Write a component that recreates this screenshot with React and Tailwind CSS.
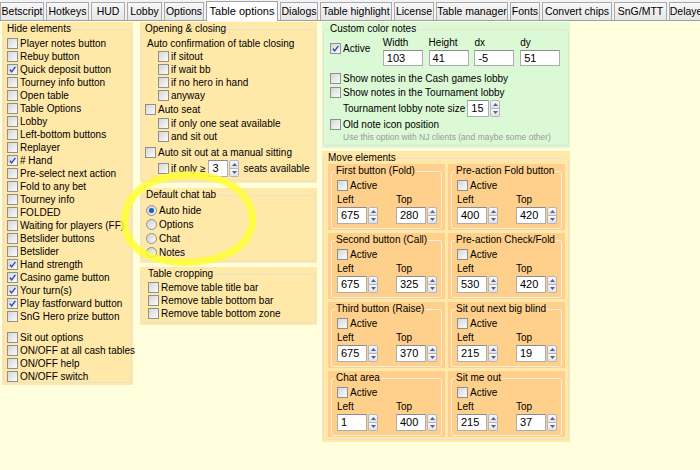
import React from 'react'

const tabs = [
  ['Betscript', 44],
  ['Hotkeys', 43],
  ['HUD', 34],
  ['Lobby', 35],
  ['Options', 40],
  ['Table options', 72],
  ['Dialogs', 38],
  ['Table highlight', 72],
  ['License', 40],
  ['Table manager', 72],
  ['Fonts', 30],
  ['Convert chips', 70],
  ['SnG/MTT', 53],
  ['Delayed', 40],
]

const hideItems = [
  ['Player notes button'],
  ['Rebuy button'],
  ['Quick deposit button', true],
  ['Tourney info button'],
  ['Open table'],
  ['Table Options'],
  ['Lobby'],
  ['Left-bottom buttons'],
  ['Replayer'],
  ['# Hand', true],
  ['Pre-select next action'],
  ['Fold to any bet'],
  ['Tourney info'],
  ['FOLDED'],
  ['Waiting for players (FF)'],
  ['Betslider buttons'],
  ['Betslider'],
  ['Hand strength', true],
  ['Casino game button', true],
  ['Your turn(s)', true],
  ['Play fastforward button', true],
  ['SnG Hero prize button'],
]

const moveBoxes = [
  ['First button (Fold)', '675', '280'],
  ['Pre-action Fold button', '400', '420'],
  ['Second button (Call)', '675', '325'],
  ['Pre-action Check/Fold', '530', '420'],
  ['Third button (Raise)', '675', '370'],
  ['Sit out next big blind', '215', '19'],
  ['Chat area', '1', '400'],
  ['Sit me out', '215', '37'],
]

function Box({ checked }) {
  return (
    <span className="relative inline-block w-[11px] h-[11px] shrink-0 border border-[#8e8f8f] bg-linear-to-br from-[#d6d6d6] to-[#fbfbfb]">
      {checked && (
        <svg viewBox="0 0 9 9" className="absolute left-0 top-0 w-[9px] h-[9px]">
          <path d="M1.8 4.6 L3.6 6.8 L7.4 1.8" fill="none" stroke="#2b48b6" strokeWidth="1.4" />
        </svg>
      )}
    </span>
  )
}

function Radio({ on }) {
  return (
    <span className="relative inline-flex items-center justify-center w-[11px] h-[11px] shrink-0 rounded-full border border-[#8e8f8f] bg-linear-to-br from-[#d0d0d0] to-[#fafafa]">
      {on && <span className="w-[5px] h-[5px] rounded-full bg-[#1f5fbf] shadow-[0_0_1px_#6aa8f0]" />}
    </span>
  )
}

function Row({ checked, children, className = '' }) {
  return (
    <div className={`flex items-center h-[13px] gap-[2px] ${className}`}>
      <Box checked={checked} />
      <span className="whitespace-nowrap leading-[13px]">{children}</span>
    </div>
  )
}

function Spinner() {
  return (
    <div className="flex flex-col w-[10px] h-[17px] ml-[1px]">
      <div className="flex-1 flex items-center justify-center border border-[#b5b5b5] rounded-t-[2px] bg-linear-to-b from-[#fafafa] to-[#e2e2e2]">
        <svg viewBox="0 0 5 3" className="w-[5px] h-[3px]"><path d="M0 3 L2.5 0 L5 3 Z" fill="#4d5fa6" /></svg>
      </div>
      <div className="flex-1 flex items-center justify-center border border-t-0 border-[#b5b5b5] rounded-b-[2px] bg-linear-to-b from-[#fafafa] to-[#e2e2e2]">
        <svg viewBox="0 0 5 3" className="w-[5px] h-[3px]"><path d="M0 0 L2.5 3 L5 0 Z" fill="#4d5fa6" /></svg>
      </div>
    </div>
  )
}

function Field({ value, w = 'w-[30px]', h = 'h-[17px]' }) {
  return (
    <div className={`${w} ${h} bg-white border border-[#abadb3] border-t-[#8a8c92] flex items-center pl-[3px] text-[11px]`}>
      {value}
    </div>
  )
}

function Spin({ value, w }) {
  return (
    <div className="flex items-center">
      <Field value={value} w={w} />
      <Spinner />
    </div>
  )
}

function Panel({ title, bg = 'bg-[#ffe8a8]', h, children, pl = 'pl-[3px]' }) {
  return (
    <div className={`${bg} ${h} px-[1px] pt-[1px] pb-[2px]`}>
      <fieldset className={`h-full min-w-0 border border-[#e6e2cf] rounded-[3px] ${pl} pr-[2px]`}>
        <legend className="leading-[12px] px-[1px] -ml-[1px]">{title}</legend>
        {children}
      </fieldset>
    </div>
  )
}

function MoveBox({ title, left, top }) {
  return (
    <div className="bg-[#ffd08b] h-[66px] px-[3px] pt-[1px] pb-[1px]">
      <fieldset className="h-full min-w-0 border border-[#f6eee0] rounded-[3px] pl-[5px]">
        <legend className="leading-[12px] -ml-[2px] px-[1px] whitespace-nowrap">{title}</legend>
        <div className="flex items-center h-[13px] gap-[2px] mt-[2px]">
          <Box />
          <span>Active</span>
        </div>
        <div className="flex mt-[1px]">
          <div className="w-[59px]">
            <div className="leading-[13px] mb-[1px]">Left</div>
            <Spin value={left} />
          </div>
          <div>
            <div className="leading-[13px] mb-[1px]">Top</div>
            <Spin value={top} />
          </div>
        </div>
      </fieldset>
    </div>
  )
}

export default function App() {
  return (
    <div className="relative w-[700px] h-[470px] overflow-hidden bg-[#ffffde] text-black text-[10px] [font-family:'Liberation_Sans',Arial,sans-serif]">
      {/* tab strip */}
      <div className="h-[21px] flex items-end gap-[2px] bg-[#f3f3f3] border-b border-[#a0a0a0]">
        {tabs.map(([t, w]) => {
          const active = t === 'Table options'
          return (
            <div
              key={t}
              style={{ width: w }}
              className={
                active
                  ? 'relative z-10 -mb-[1px] h-[20px] shrink-0 flex items-center justify-center bg-white border border-b-0 border-[#a0a0a0] text-[11px] whitespace-nowrap'
                  : 'h-[18px] shrink-0 flex items-center justify-center bg-linear-to-b from-[#f8f8f8] to-[#e6e6e6] border border-b-0 border-[#a9a9a9] text-[10.5px] whitespace-nowrap overflow-hidden'
              }
            >
              {t}
            </div>
          )
        })}
      </div>

      <div className="flex pt-[1px]">
        {/* left column */}
        <div className="ml-[2px] w-[131px]">
          <Panel title="Hide elements" h="h-[363px]">
            <div className="pt-[2px]">
              {hideItems.map(([t, c]) => (
                <Row key={t} checked={c}>{t}</Row>
              ))}
              <div className="h-[8px]" />
              <Row>Sit out options</Row>
              <Row>ON/OFF at all cash tables</Row>
              <Row>ON/OFF help</Row>
              <Row>ON/OFF switch</Row>
            </div>
          </Panel>
        </div>

        {/* middle column */}
        <div className="ml-[7px] w-[177px] flex flex-col gap-[4px]">
          <Panel title="Opening & closing" h="h-[161px]">
            <div className="pt-[2px]">
              <div className="leading-[13px] pl-[2px]">Auto confirmation of table closing</div>
              <div className="pl-[13px]">
                <Row>if sitout</Row>
                <Row>if wait bb</Row>
                <Row>if no hero in hand</Row>
                <Row>anyway</Row>
              </div>
              <Row className="mt-[1px]">Auto seat</Row>
              <div className="pl-[13px] mt-[1px]">
                <Row>if only one seat available</Row>
                <Row>and sit out</Row>
              </div>
              <Row className="mt-[3px]">Auto sit out at a manual sitting</Row>
              <div className="pl-[13px] mt-[1px] flex items-center h-[17px] gap-[2px]">
                <Box />
                <span className="whitespace-nowrap">if only ≥</span>
                <div className="flex items-center ml-[1px]">
                  <Field value="3" w="w-[20px]" />
                  <Spinner />
                </div>
                <span className="ml-[2px] whitespace-nowrap">seats available</span>
              </div>
            </div>
          </Panel>

          <div className="mt-[1px]">
            <Panel title="Default chat tab" h="h-[75px]" pl="pl-[4px]">
              <div className="pt-[2px]">
                {['Auto hide', 'Options', 'Chat', 'Notes'].map((t, i) => (
                  <div key={t} className="flex items-center h-[14px] gap-[2px]">
                    <Radio on={i === 0} />
                    <span>{t}</span>
                  </div>
                ))}
              </div>
            </Panel>
          </div>

          <Panel title="Table cropping" h="h-[58px]" pl="pl-[6px]">
            <div className="pt-[1px]">
              <Row>Remove table title bar</Row>
              <Row>Remove table bottom bar</Row>
              <Row>Remove table bottom zone</Row>
            </div>
          </Panel>
        </div>

        {/* right column */}
        <div className="ml-[5px] w-[248px] flex flex-col gap-[3px]">
          <Panel title="Custom color notes" bg="bg-[#dcf9d6]" h="h-[126px]" pl="pl-[6px]">
            <div className="flex mt-[1px]">
              <div className="w-[53px] pt-[6px]">
                <div className="flex items-center h-[13px] gap-[2px]">
                  <Box checked />
                  <span>Active</span>
                </div>
              </div>
              {[['Width', '103'], ['Height', '41'], ['dx', '-5'], ['dy', '51']].map(([l, v]) => (
                <div key={l} className="w-[46px]">
                  <div className="leading-[13px] mb-[1px]">{l}</div>
                  <Field value={v} w="w-[40px]" h="h-[16px]" />
                </div>
              ))}
            </div>
            <div className="mt-[6px]">
              <Row>Show notes in the Cash games lobby</Row>
              <Row className="mt-[1px]">Show notes in the Tournament lobby</Row>
              <div className="flex items-center h-[17px] pl-[13px] mt-[1px]">
                <span className="whitespace-nowrap mr-[2px]">Tournament lobby note size</span>
                <Field value="15" w="w-[22px]" />
                <Spinner />
              </div>
              <Row className="mt-[1px]">Old note icon position</Row>
              <div className="pl-[13px] text-[8.5px] text-[#9a9a9a] leading-[12px] whitespace-nowrap">
                Use this option with NJ clients (and maybe some other)
              </div>
            </div>
          </Panel>

          <Panel title="Move elements" h="h-[291px]" pl="pl-[4px]">
            <div className="grid grid-cols-2 gap-x-[3px] gap-y-[3px] pr-[1px]">
              {moveBoxes.map(([t, l, tp]) => (
                <MoveBox key={t} title={t} left={l} top={tp} />
              ))}
            </div>
          </Panel>
        </div>
      </div>

      {/* highlighter annotation */}
      <svg className="absolute left-0 top-0 w-[700px] h-[470px] pointer-events-none" viewBox="0 0 700 470">
        <path
          d="M 214 178 C 180 170, 142 178, 129 203 C 118 226, 128 250, 155 258 C 186 267, 230 262, 247 238 C 260 218, 250 188, 214 178 Z"
          fill="none"
          stroke="#ffff2e"
          strokeOpacity="0.8"
          strokeWidth="7.5"
          strokeLinecap="round"
        />
      </svg>
    </div>
  )
}
